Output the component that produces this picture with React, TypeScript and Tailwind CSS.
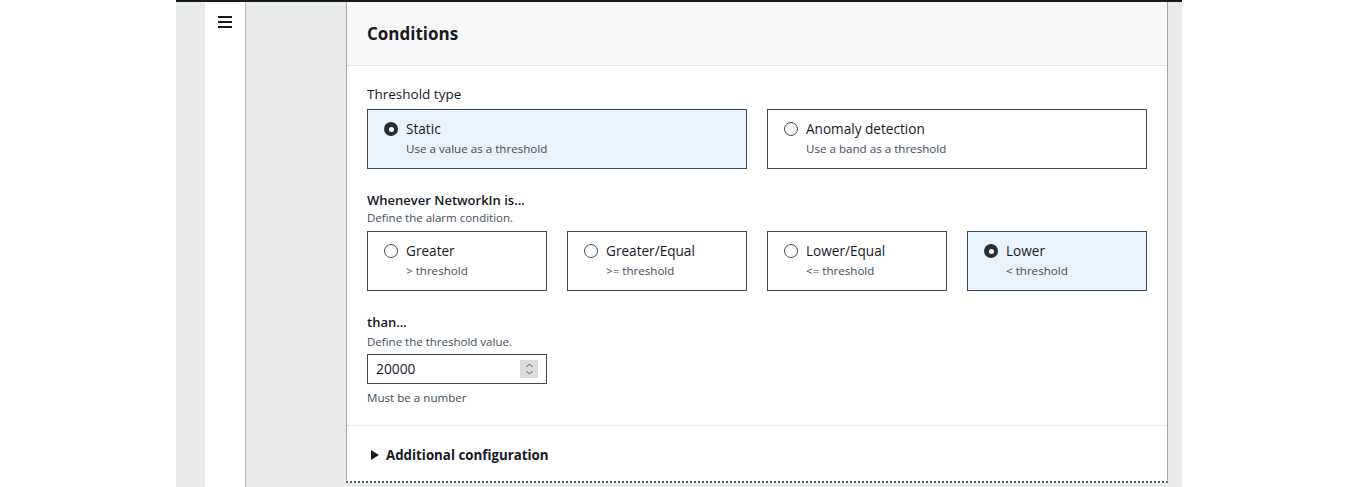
import React from "react";

function Radio({ checked }: { checked: boolean }) {
  return checked ? (
    <span className="mt-[3px] flex h-[14px] w-[14px] shrink-0 items-center justify-center rounded-full bg-[#2a2f36]">
      <span className="h-[5px] w-[5px] rounded-full bg-white" />
    </span>
  ) : (
    <span className="mt-[3px] h-[14px] w-[14px] shrink-0 rounded-full border-[1.5px] border-[#414d5c] bg-white" />
  );
}

function Tile({ title, desc, checked, wide }: { title: string; desc: string; checked?: boolean; wide?: boolean }) {
  return (
    <div
      className={`flex h-[60px] gap-[8px] border border-[#3d4a5a] pl-[16px] pt-[9px] ${
        checked ? "bg-[#e8f4fd]" : "bg-white"
      } ${wide ? "w-[380px]" : "w-[180px]"}`}
    >
      <Radio checked={!!checked} />
      <div className="flex flex-col">
        <span className="text-[13.6px] leading-[20px] font-medium text-[#16191f]">{title}</span>
        <span className="mt-[2px] text-[11.6px] leading-[16px] text-[#414d5c]">{desc}</span>
      </div>
    </div>
  );
}

export default function App() {
  return (
    <div className="flex h-[487px] w-[1359px] bg-white font-['Open_Sans',sans-serif] text-[#16191f]">
      <div className="w-[176px] shrink-0" />
      <div className="flex h-full w-[1006px] shrink-0 flex-col bg-[#e9ebea]">
        <div className="h-[2px] w-full bg-[#16191f]" />
        <div className="flex flex-1">
          <div className="w-[29px] shrink-0" />
          <div className="w-[41px] shrink-0 border-r border-[#b8bcbf] bg-white pl-[13px] pt-[14px]">
            <div className="flex w-[14px] flex-col gap-[3px]">
              <span className="h-[2px] w-full bg-[#16191f]" />
              <span className="h-[2px] w-full bg-[#16191f]" />
              <span className="h-[2px] w-full bg-[#16191f]" />
            </div>
          </div>
          <div className="w-[100px] shrink-0" />
          <div className="flex h-[481px] w-[822px] shrink-0 flex-col border-x border-x-[#a3a8ad] bg-white [border-bottom:2px_dotted_#545b64]">
            <div className="flex h-[64px] shrink-0 items-center border-b border-dotted border-[#d5dbdb] bg-[#f8f8f8] pl-[20px]">
              <h2 className="text-[17px] font-bold leading-[24px]">Conditions</h2>
            </div>
            <div className="flex flex-col px-[20px] pt-[18px]">
              <div className="text-[13.5px] font-medium leading-[20px]">Threshold type</div>
              <div className="mt-[5px] flex gap-[20px]">
                <Tile wide checked title="Static" desc="Use a value as a threshold" />
                <Tile wide title="Anomaly detection" desc="Use a band as a threshold" />
              </div>
              <div className="mt-[21px] text-[13px] font-semibold leading-[20px]">Whenever NetworkIn is...</div>
              <div className="text-[11.5px] leading-[16px] text-[#414d5c]">Define the alarm condition.</div>
              <div className="mt-[5px] flex gap-[20px]">
                <Tile title="Greater" desc="> threshold" />
                <Tile title="Greater/Equal" desc=">= threshold" />
                <Tile title="Lower/Equal" desc="<= threshold" />
                <Tile checked title="Lower" desc="< threshold" />
              </div>
              <div className="mt-[21px] text-[13px] font-semibold leading-[20px]">than...</div>
              <div className="mt-[2px] text-[11.5px] leading-[16px] text-[#414d5c]">Define the threshold value.</div>
              <div className="mt-[4px] flex h-[30px] w-[180px] items-center justify-between border border-[#3d4a5a] pl-[8px] pr-[8px]">
                <span className="text-[13.8px] font-medium">20000</span>
                <span className="flex h-[18px] w-[18px] flex-col items-center justify-center bg-[#dcdcdc]">
                  <svg width="9" height="14" viewBox="0 0 9 14" fill="none" stroke="#555" strokeWidth="1">
                    <path d="M1.5 5 L4.5 2 L7.5 5" />
                    <path d="M1.5 9 L4.5 12 L7.5 9" />
                  </svg>
                </span>
              </div>
              <div className="mt-[6px] text-[11.6px] leading-[16px] text-[#414d5c]">Must be a number</div>
            </div>
            <div className="mt-[19px] border-t border-dotted border-[#d5dbdb]" />
            <div className="flex items-center gap-[7px] pl-[24px] pt-[19px]">
              <svg width="8" height="10" viewBox="0 0 8 10">
                <path d="M0 0 L8 5 L0 10 Z" fill="#16191f" />
              </svg>
              <span className="text-[13.3px] font-bold leading-[20px]">Additional configuration</span>
            </div>
          </div>
          <div className="flex-1" />
        </div>
      </div>
    </div>
  );
}
